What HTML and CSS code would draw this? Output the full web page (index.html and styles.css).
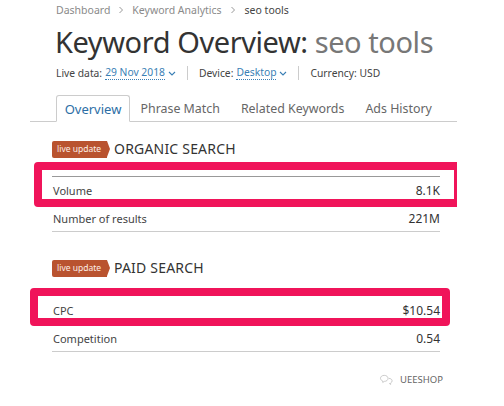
FILE: index.html
```html
<!DOCTYPE html>
<html lang="en">
  <head>
    <meta charset="UTF-8" />
    <meta name="viewport" content="width=device-width, initial-scale=1.0" />
    <title>Keyword Overview</title>
    <link rel="stylesheet" href="styles.css">
  </head>
  <body>
    <div class="container">
      <div class="crumbs">
        <span>Dashboard</span>
        <svg class="crumb-arrow" viewBox="0 0 6 8"><path d="M1.5 1l3 3-3 3" /></svg>
        <span>Keyword Analytics</span>
        <svg class="crumb-arrow" viewBox="0 0 6 8"><path d="M1.5 1l3 3-3 3" /></svg>
        <span class="crumb-current">seo tools</span>
      </div>

      <h1>Keyword Overview: <span class="keyword">seo tools</span></h1>

      <div class="meta">
        <div class="meta-item">
          Live data: <span class="meta-link">29 Nov 2018</span>
          <svg class="caret" viewBox="0 0 8 5"><path d="M1 1l3 3 3-3" /></svg>
        </div>
        <div class="meta-item">
          Device: <span class="meta-link">Desktop</span>
          <svg class="caret" viewBox="0 0 8 5"><path d="M1 1l3 3 3-3" /></svg>
        </div>
        <div class="meta-item">Currency: USD</div>
      </div>

      <div class="tabs">
        <div class="tab active">Overview</div>
        <div class="tab">Phrase Match</div>
        <div class="tab">Related Keywords</div>
        <div class="tab">Ads History</div>
      </div>

      <div class="section organic">
        <div class="section-head">
          <span class="badge">live update</span>
          <h2>ORGANIC SEARCH</h2>
        </div>
        <div class="row first">
          <span>Volume</span>
          <span>8.1K</span>
        </div>
        <div class="row">
          <span>Number of results</span>
          <span>221M</span>
        </div>
        <div class="mark mark-organic"></div>
      </div>

      <div class="section paid">
        <div class="section-head">
          <span class="badge">live update</span>
          <h2>PAID SEARCH</h2>
        </div>
        <div class="row first">
          <span>CPC</span>
          <span>$10.54</span>
        </div>
        <div class="row">
          <span>Competition</span>
          <span>0.54</span>
        </div>
        <div class="mark mark-paid"></div>
      </div>
    </div>

    <div class="watermark">
      <svg class="watermark-icon" viewBox="0 0 20 16">
        <path d="M7 2.500c3 0 5 1.600 5 4s-2 4-5 4l-2 1.500v-2C3 9.200 2 8 2 6.500c0-2.400 2-4 5-4z" />
        <path d="M13 6.500c2.500 0 4.500 1.300 4.500 3.300 0 1.200-.7 2.200-2 2.800v2l-2-1.500" />
      </svg>
      <span>UEESHOP</span>
    </div>
  </body>
</html>
```

FILE: styles.css
```css
body {
  font-family: "Noto Sans", Arial, sans-serif;
  background-color: #fff;
  color: #333;
  margin: 0;
  padding: 0;
  height: 406px;
  overflow: hidden;
  position: relative;
}

.container {
  width: 427px;
  margin-left: 30px;
}

.crumbs {
  display: flex;
  align-items: center;
  height: 20px;
  padding-left: 26px;
  font-size: 10.5px;
  color: #8a8a8a;
}

.crumb-arrow {
  width: 6px;
  height: 8px;
  margin: 0 8px;
  fill: none;
  stroke: #999;
  stroke-width: 1;
}

.crumb-current {
  margin-left: 1px;
  color: #444;
}

h1 {
  margin: 3px 0 0;
  padding-left: 25px;
  font-size: 29px;
  font-weight: 400;
  letter-spacing: -0.43px;
  line-height: 38px;
  color: #333;
  white-space: nowrap;
}

.keyword {
  color: #777;
}

.meta {
  display: flex;
  align-items: center;
  height: 18px;
  margin-top: 3px;
  padding-left: 26px;
  font-size: 10.3px;
  color: #444;
}

.meta-item {
  display: flex;
  align-items: center;
  gap: 3px;
  white-space: nowrap;
  padding-right: 11px;
  margin-right: 11px;
  border-right: 1px solid #ccc;
}

.meta-item:last-child {
  border-right: none;
}

.meta-link {
  color: #3a7fb5;
  border-bottom: 1px dotted #3a7fb5;
  line-height: 13px;
}

.caret {
  width: 8px;
  height: 5px;
  fill: none;
  stroke: #3a7fb5;
  stroke-width: 1.1;
}

.tabs {
  display: flex;
  height: 27px;
  margin-top: 13px;
  padding-left: 26px;
  border-bottom: 1px solid #ccc;
  box-sizing: border-box;
}

.tab {
  font-size: 12.4px;
  line-height: 27px;
  padding: 0 10.5px;
  color: #666;
  white-space: nowrap;
}

.tab.active {
  width: 74px;
  height: 27px;
  padding: 0;
  font-size: 13px;
  line-height: 26px;
  text-align: center;
  color: #2c6ea5;
  border: 1px solid #ccc;
  border-bottom: 1px solid #fff;
  border-radius: 3px 3px 0 0;
  box-sizing: border-box;
}

.section {
  position: relative;
  margin: 0 17px 0 22px;
}

.organic {
  margin-top: 18px;
}

.paid {
  margin-top: 27px;
}

.section-head {
  display: flex;
  align-items: center;
  gap: 7px;
  height: 18px;
}

.badge {
  position: relative;
  width: 50px;
  height: 17px;
  padding-left: 5px;
  font-size: 8.5px;
  line-height: 16px;
  color: #fdeee6;
  background-color: #b9532f;
  border-radius: 2px 0 0 2px;
  white-space: nowrap;
}

.badge::after {
  content: "";
  position: absolute;
  left: 100%;
  top: 0;
  border-left: 3px solid #b9532f;
  border-top: 8.5px solid transparent;
  border-bottom: 8.5px solid transparent;
}

h2 {
  margin: 0 0 2px;
  font-size: 14px;
  font-weight: 400;
  color: #333;
  letter-spacing: 0.2px;
}

.row {
  display: flex;
  justify-content: space-between;
  align-items: center;
  height: 28px;
  padding-left: 1px;
  padding-top: 2px;
  font-size: 11px;
  color: #444;
  border-bottom: 1px solid #ccc;
  box-sizing: border-box;
}

.row.first {
  margin-top: 18px;
  padding-top: 0;
  border-bottom: none;
}

.paid .row.first {
  margin-top: 19px;
}

.organic .row.first {
  border-top: 1px solid #999;
}

.row span:last-child {
  font-size: 12px;
  color: #333;
}

.mark {
  position: absolute;
  border: 8px solid #f0145a;
  box-sizing: border-box;
}

.mark-organic {
  left: -18px;
  top: 22px;
  width: 423px;
  height: 45px;
  border-right-width: 3px;
  border-radius: 4px 0 0 4px;
}

.mark-paid {
  left: -22px;
  top: 29px;
  width: 420px;
  height: 38px;
  border-radius: 4px;
}

.watermark {
  position: absolute;
  left: 379px;
  top: 373px;
  display: flex;
  align-items: center;
  gap: 6px;
  font-size: 9.5px;
  color: #666;
}

.watermark-icon {
  width: 15px;
  height: 13px;
  fill: none;
  stroke: #bbb;
  stroke-width: 1;
}
```
